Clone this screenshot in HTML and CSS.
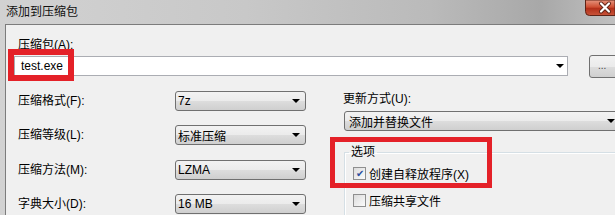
FILE: index.html
```html
<!DOCTYPE html>
<html>
<head>
  <meta charset="utf-8">
  <link rel="stylesheet" href="styles.css">
</head>
<body>
  <div class="window">
    <div class="titlebar">
      <span class="title">添加到压缩包</span>
      <svg class="caption-x" width="30" height="16" viewBox="0 0 30 16">
        <defs>
          <linearGradient id="redGrad" x1="0" y1="0" x2="0" y2="1">
            <stop offset="0" stop-color="#e6957f"/>
            <stop offset="0.45" stop-color="#cf5034"/>
            <stop offset="0.55" stop-color="#b3301a"/>
            <stop offset="1" stop-color="#c9553a"/>
          </linearGradient>
        </defs>
        <path d="M0.5 0 V11.5 Q0.5 15.5 4.5 15.5 H30 V0 Z" fill="url(#redGrad)" stroke="#5e2316"/>
        <path d="M16 3.5 L24 11.5 M24 3.5 L16 11.5" stroke="#5e2316" stroke-width="4" stroke-linecap="round"/>
        <path d="M16 3.5 L24 11.5 M24 3.5 L16 11.5" stroke="#fff" stroke-width="2.2" stroke-linecap="round"/>
      </svg>
    </div>

    <div class="client">
      <div class="label archive-label">压缩包(A):</div>
      <div class="archive-row">
        <div class="combo">
          <span>test.exe</span>
          <span class="arrow"></span>
        </div>
        <div class="browse">...</div>
      </div>

      <div class="columns">
        <div class="left">
          <div class="label">压缩格式(F):</div>
          <div class="select"><span>7z</span><span class="arrow"></span></div>
          <div class="label">压缩等级(L):</div>
          <div class="select"><span>标准压缩</span><span class="arrow"></span></div>
          <div class="label">压缩方法(M):</div>
          <div class="select"><span>LZMA</span><span class="arrow"></span></div>
          <div class="label">字典大小(D):</div>
          <div class="select"><span>16 MB</span><span class="arrow"></span></div>
        </div>

        <div class="right">
          <div class="label update-label">更新方式(U):</div>
          <div class="select wide"><span>添加并替换文件</span><span class="arrow"></span></div>
          <fieldset class="group">
            <legend>选项</legend>
            <div class="check"><span class="box checked">&#x2714;</span>创建自释放程序(X)</div>
            <div class="check"><span class="box"></span>压缩共享文件</div>
          </fieldset>
        </div>
      </div>
    </div>

    <!-- red annotation boxes -->
    <div class="mark mark-archive"></div>
    <div class="mark mark-sfx"></div>
  </div>
</body>
</html>
```

FILE: styles.css
```css
html, body {
  margin: 0;
  padding: 0;
}

body {
  width: 615px;
  height: 215px;
  overflow: hidden;
  font-family: "Liberation Sans", "Noto Sans CJK SC", sans-serif;
  font-size: 12px;
  color: #000;
}

.window {
  position: relative;
  width: 615px;
  height: 215px;
  overflow: hidden;
  display: flex;
  flex-direction: column;
  background: linear-gradient(to right, #d2d2d2 0%, #c8c8c8 40%, #bababa 70%, #a8a8a8 88%, #c0c0c0 100%);
}

.titlebar {
  height: 24px;
  flex: none;
  display: flex;
  justify-content: space-between;
  align-items: flex-start;
}

.title {
  margin: 5px 0 0 6px;
  font-size: 12px;
  line-height: 15px;
  color: #111;
}

.caption-x {
  flex: none;
  display: block;
}

.client {
  flex: 1;
  margin-left: 5px;
  border-top: 1px solid #7c7c7c;
  border-left: 1px solid #7c7c7c;
  background: #f0f0f0;
  padding: 13px 0 0 8px;
}

.label {
  line-height: 14px;
  white-space: nowrap;
}

.archive-label {
  margin-left: 4px;
}

.archive-row {
  display: flex;
  align-items: flex-start;
  margin-top: 4px;
}

.combo {
  flex: none;
  width: 554px;
  height: 20px;
  box-sizing: border-box;
  border: 1px solid #abadb3;
  background: #fff;
  display: flex;
  align-items: center;
  padding-left: 6px;
}

.arrow {
  margin-left: auto;
  margin-right: 2px;
  width: 0;
  height: 0;
  border-left: 4px solid transparent;
  border-right: 4px solid transparent;
  border-top: 4px solid #000;
}

.combo .arrow {
  margin-right: 3px;
}

.browse {
  flex: none;
  margin: -1px 0 0 21px;
  width: 40px;
  height: 23px;
  box-sizing: border-box;
  border: 1px solid #707070;
  border-radius: 3px;
  background: linear-gradient(#f2f2f2, #ebebeb 50%, #dddddd 51%, #cfcfcf);
  font-size: 10px;
  line-height: 20px;
  padding-left: 8px;
  color: #444;
}

.columns {
  display: flex;
  margin-top: 13px;
}

.left {
  flex: none;
  display: grid;
  grid-template-columns: 161px 131px;
  grid-auto-rows: 20px;
  row-gap: 14.3px;
  align-items: center;
}

.left .label {
  margin-left: 4px;
}

.select {
  height: 20px;
  box-sizing: border-box;
  border: 1px solid #707070;
  border-radius: 3px;
  background: linear-gradient(#f2f2f2, #ebebeb 50%, #dddddd 51%, #cfcfcf);
  display: flex;
  align-items: center;
  padding-left: 2px;
}

.select .arrow {
  margin-right: 5px;
}

.right {
  margin-left: 37px;
  flex: none;
  width: 280px;
  display: flex;
  flex-direction: column;
}

.update-label {
  margin-top: 1px;
}

.select.wide {
  margin-top: 5px;
  margin-left: 1px;
  width: 277px;
  padding-left: 4px;
}

.group {
  margin: 14px 0 0 1px;
  padding: 7px 0 0 8px;
  border: 1px solid #d5dfe5;
  border-right: none;
  border-bottom: none;
  box-shadow: inset 1px 1px #fff;
  min-width: 0;
}

.group legend {
  padding: 0 2px;
  margin-left: -4px;
  line-height: 14px;
}

.check {
  display: flex;
  align-items: center;
  height: 14px;
  margin-bottom: 13px;
  white-space: nowrap;
}

.box {
  width: 13px;
  height: 13px;
  box-sizing: border-box;
  border: 1px solid #8f8f8f;
  background: linear-gradient(135deg, #dcdcdc, #fbfbfb);
  margin-right: 3px;
  font-size: 10px;
  line-height: 11px;
  text-align: center;
  color: #2b4f9e;
}

.mark {
  position: absolute;
  border: 6px solid #e42128;
  box-sizing: border-box;
}

.mark-archive {
  left: 8px;
  top: 49px;
  width: 66px;
  height: 32px;
}

.mark-sfx {
  border-width: 5px;
  left: 330px;
  top: 137px;
  width: 162px;
  height: 51px;
}
```
